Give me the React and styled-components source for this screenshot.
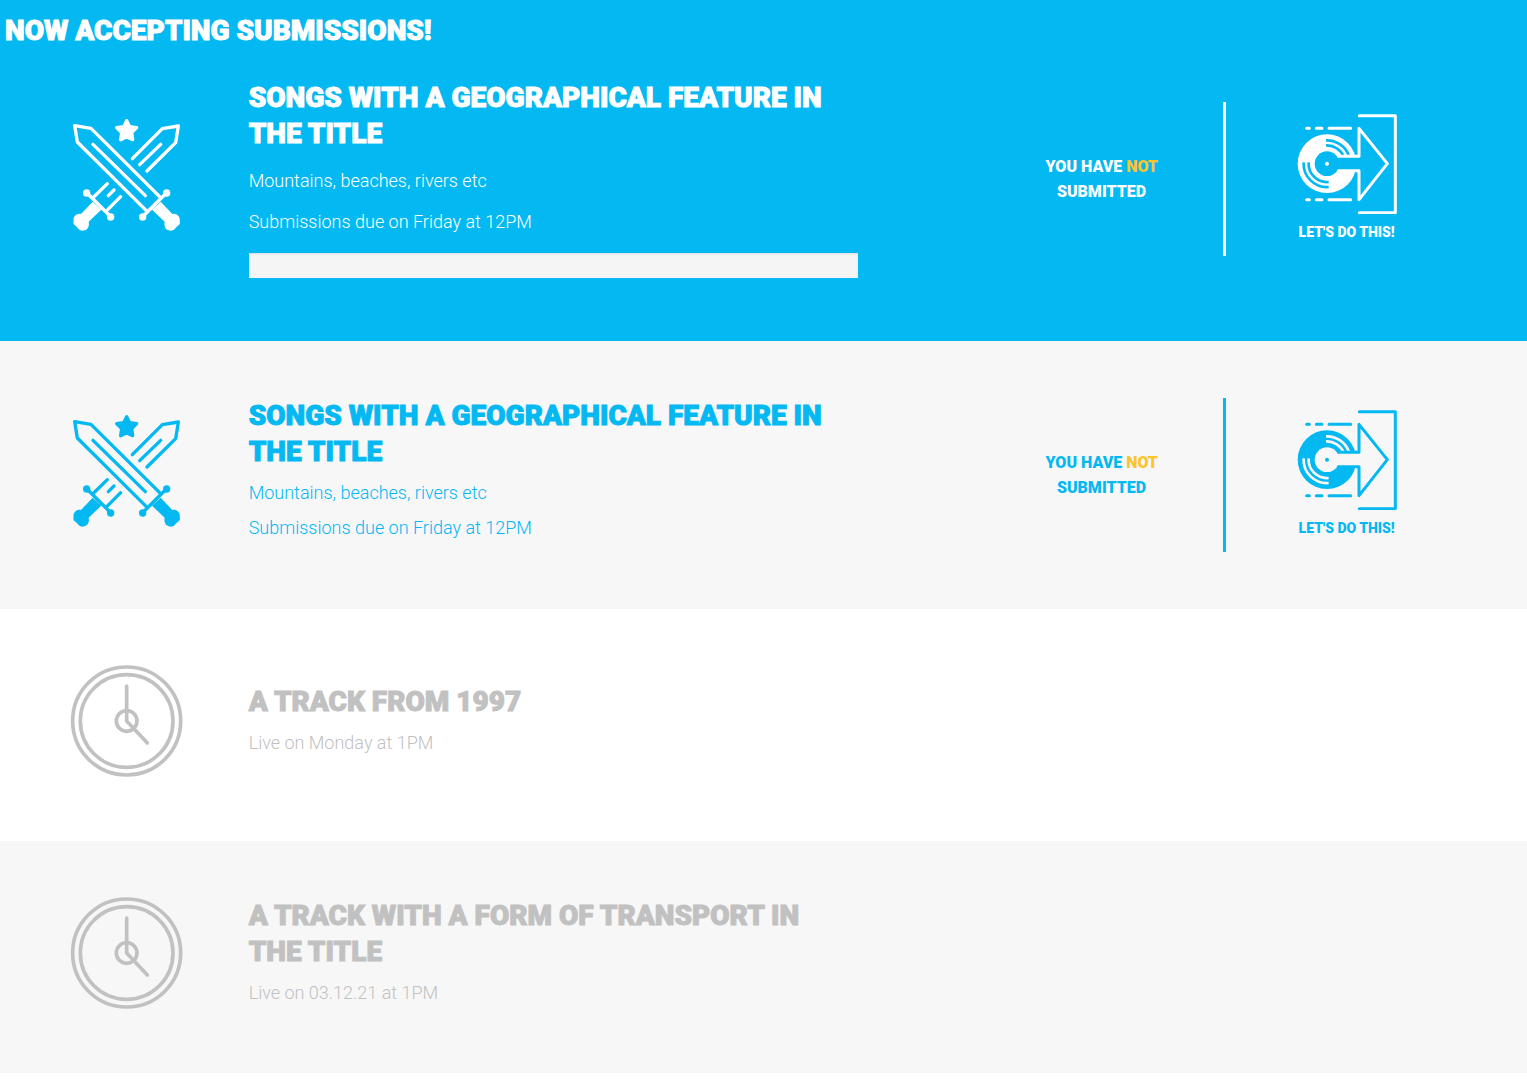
import React from 'react';
import styled, { createGlobalStyle } from 'styled-components';

const GlobalStyle = createGlobalStyle`
  body {
    margin: 0;
    background-color: #fff;
    font-family: Roboto, 'Liberation Sans', sans-serif;
  }
`;

const THEMES = {
  live: { background: '#04b8f2', color: '#fff' },
  open: { background: '#f7f7f7', color: '#04b8f2' },
  pending: { background: '#fff', color: '#c1c1c1' },
  pendingAlt: { background: '#f7f7f7', color: '#c1c1c1' },
};

const Section = styled.section`
  --section-background: ${(p) => THEMES[p.$theme].background};
  box-sizing: border-box;
  padding: 0 60px 0 5px;
  background-color: var(--section-background);
  color: ${(p) => THEMES[p.$theme].color};
`;

const SectionTitle = styled.h1`
  margin: 0;
  padding: 13px 0 31px;
  font-size: 28px;
  font-weight: 900;
  line-height: 36px;
  text-transform: uppercase;
  -webkit-text-stroke: 1px currentColor;
`;

const Row = styled.div`
  display: grid;
  grid-template-columns: 1fr 3fr 1fr 1fr;
  align-items: center;
  padding: ${(p) => p.$padding};
`;

const IconWrap = styled.div`
  display: flex;
  justify-content: center;
  padding-bottom: 8px;

  svg {
    width: 112px;
    height: 112px;
    overflow: visible;
  }
`;

const Details = styled.div`
  display: flex;
  flex-direction: column;
  gap: ${(p) => (p.$spacious ? 16 : 10)}px;
  padding-bottom: ${(p) => (p.$spacious ? 0 : 12)}px;
`;

const Title = styled.h2`
  width: 80%;
  margin: 0;
  font-size: 28px;
  font-weight: 900;
  line-height: 36px;
  text-transform: uppercase;
  -webkit-text-stroke: 1px currentColor;
`;

const Text = styled.p`
  margin: 0;
  font-size: 18px;
  font-weight: 300;
  line-height: 25px;
`;

const ProgressTrack = styled.div`
  width: 83.4%;
  height: 25px;
  margin-top: 3px;
  background-color: #f5f5f5;
  box-shadow: inset 0 1px 2px rgba(0, 0, 0, 0.1);
`;

const Status = styled.p`
  margin: 0;
  padding: 0 48px;
  font-size: 16px;
  font-weight: 900;
  line-height: 25px;
  text-align: center;
  text-transform: uppercase;

  span {
    color: #fdc42b;
  }
`;

const Action = styled.div`
  display: flex;
  justify-content: center;
  border-left: 3px solid currentColor;
`;

const SubmitLink = styled.a`
  display: flex;
  flex-direction: column;
  align-items: center;
  gap: 8px;
  padding: 12px 0 14px;
  color: inherit;
  font-size: 14px;
  font-weight: 900;
  line-height: 20px;
  text-decoration: none;
  text-transform: uppercase;

  svg {
    width: 100px;
    height: 100px;
  }
`;

function SwordsIcon() {
  return (
    <svg viewBox="33 42 336 336" fill="none" stroke="currentColor" strokeWidth="10" strokeLinecap="round" strokeLinejoin="round" aria-hidden="true">
      <path
        d="M200 47l9 18 21 3-15 15 3 21-18-9-18 9 3-21-15-15 21-3z"
        fill="currentColor"
      />
      <path d="M44 62L93 70 302 278 M44 62L52 111 262 320" />
      <path d="M99 118L256 272" />
      <path d="M217 161L307 71 355 63 347 113 261 198" />
      <path d="M302 118L239 179" />
      <path d="M142 236L98 279 M162 255L145 272 M182 275L138 319" />
      <path d="M316 267L250 333 M84 267L150 333" />
      <g fill="currentColor" stroke="none">
        <circle cx="320" cy="264" r="11" />
        <circle cx="248" cy="336" r="11" />
        <circle cx="80" cy="264" r="11" />
        <circle cx="152" cy="336" r="11" />
        <path d="M302 290L337 327C350 324 362 335 359 349C361 353 360 359 355 361L346 370C342 376 334 379 328 376C317 375 311 363 314 350L276 314z" />
        <path d="M98 290L63 327C50 324 38 335 41 349C39 353 40 359 45 361L54 370C58 376 66 379 72 376C83 375 89 363 86 350L124 314z" />
      </g>
    </svg>
  );
}

function ClockIcon() {
  return (
    <svg viewBox="33 28 336 336" fill="none" stroke="currentColor" strokeWidth="11" strokeLinecap="round" strokeLinejoin="round" aria-hidden="true">
      <circle cx="200" cy="196" r="162" />
      <circle cx="200" cy="196" r="139" />
      <circle cx="200" cy="196" r="31" />
      <path d="M200 91V196L262 262" />
    </svg>
  );
}

function SubmitIcon() {
  const hole = 'var(--section-background)';
  return (
    <svg viewBox="52 42 300 300" fill="none" stroke="currentColor" strokeWidth="9" strokeLinecap="round" strokeLinejoin="round" aria-hidden="true">
      <path d="M239 47H347V338H239" />
      <path d="M81 85H89 M110 85H127 M148 85H213 M81 299H89 M110 299H127 M148 299H213" />
      <circle cx="142" cy="191" r="88" fill="currentColor" stroke="none" />
      <circle cx="142" cy="191" r="37" fill={hole} stroke="none" />
      <g stroke={hole} strokeWidth="8" strokeLinecap="butt">
        <path d="M139 121A70 70 0 0 1 208 168" />
        <path d="M139 136A55 55 0 0 1 193 171" />
        <path d="M72 187A70 70 0 0 0 147 261" />
        <path d="M87 187A55 55 0 0 0 147 246" />
      </g>
      <path d="M168 169H238V85L323 191L238 299V212H168z" fill={hole} stroke="none" />
      <path d="M176 169H238V85L323 191L238 299V212H176" />
      <circle cx="142" cy="191" r="6" fill="currentColor" stroke="none" />
    </svg>
  );
}

function SubmissionActions() {
  return (
    <>
      <Status>
        You have <span>not</span> submitted
      </Status>
      <Action>
        <SubmitLink href="#submit">
          <SubmitIcon />
          Let's do this!
        </SubmitLink>
      </Action>
    </>
  );
}

const rounds = [
  {
    theme: 'open',
    title: 'Songs with a geographical feature in the title',
    lines: ['Mountains, beaches, rivers etc', 'Submissions due on Friday at 12PM'],
    open: true,
  },
  { theme: 'pending', title: 'A track from 1997', lines: ['Live on Monday at 1PM'] },
  { theme: 'pendingAlt', title: 'A track with a form of transport in the title', lines: ['Live on 03.12.21 at 1PM'] },
];

function App() {
  return (
    <main>
      <GlobalStyle />
      <Section $theme="live">
        <SectionTitle>Now accepting submissions!</SectionTitle>
        <Row $padding="0 0 63px">
          <IconWrap>
            <SwordsIcon />
          </IconWrap>
          <Details $spacious>
            <Title>Songs with a geographical feature in the title</Title>
            <Text>Mountains, beaches, rivers etc</Text>
            <Text>Submissions due on Friday at 12PM</Text>
            <ProgressTrack />
          </Details>
          <SubmissionActions />
        </Row>
      </Section>
      {rounds.map((round) => (
        <Section key={round.theme} $theme={round.theme}>
          <Row $padding={round.open ? '57px 0' : '56px 0'}>
            <IconWrap>{round.open ? <SwordsIcon /> : <ClockIcon />}</IconWrap>
            <Details>
              <Title>{round.title}</Title>
              {round.lines.map((line) => (
                <Text key={line}>{line}</Text>
              ))}
            </Details>
            {round.open && <SubmissionActions />}
          </Row>
        </Section>
      ))}
    </main>
  );
}

export default App;
